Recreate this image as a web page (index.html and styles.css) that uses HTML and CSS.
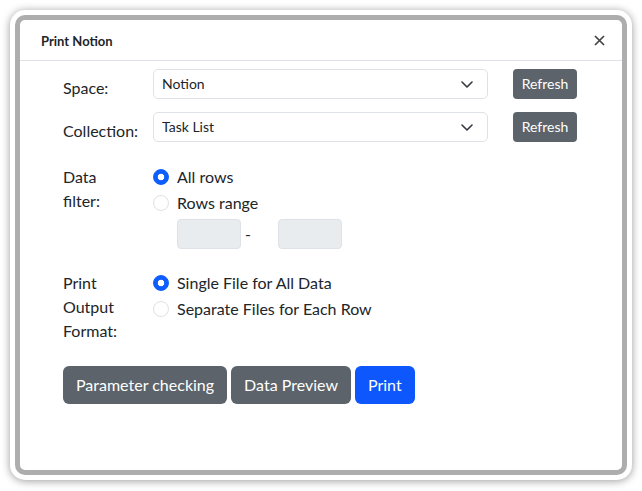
FILE: index.html
```html
<!DOCTYPE html>
<html>
<head>
<meta charset="utf-8">
<link rel="stylesheet" href="styles.css">
</head>
<body>
<div class="frame">
  <div class="modal">
    <div class="modal-header">
      <span class="title">Print Notion</span>
      <svg class="close" width="11" height="11" viewBox="0 0 11 11"><path d="M1 1L10 10M10 1L1 10" stroke="#444" stroke-width="1.7" fill="none"/></svg>
    </div>
    <div class="modal-body">
      <div class="sel-row">
        <div class="label">Space:</div>
        <div class="select"><span>Notion</span><svg width="12" height="7" viewBox="0 0 12 7"><path d="M1 1l5 5 5-5" stroke="#343a40" stroke-width="1.6" fill="none" stroke-linecap="round" stroke-linejoin="round"/></svg></div>
        <button class="btn btn-sm">Refresh</button>
      </div>
      <div class="sel-row second">
        <div class="label">Collection:</div>
        <div class="select"><span>Task List</span><svg width="12" height="7" viewBox="0 0 12 7"><path d="M1 1l5 5 5-5" stroke="#343a40" stroke-width="1.6" fill="none" stroke-linecap="round" stroke-linejoin="round"/></svg></div>
        <button class="btn btn-sm">Refresh</button>
      </div>
      <div class="group filter">
        <div class="glabel">Data<br>filter:</div>
        <div class="opts">
          <div class="check"><span class="radio on"></span>All rows</div>
          <div class="check"><span class="radio"></span>Rows range</div>
          <div class="range"><span class="input"></span><span class="dash">-</span><span class="input"></span></div>
        </div>
      </div>
      <div class="group format">
        <div class="glabel">Print<br>Output<br>Format:</div>
        <div class="opts">
          <div class="check"><span class="radio on"></span>Single File for All Data</div>
          <div class="check"><span class="radio"></span>Separate Files for Each Row</div>
        </div>
      </div>
      <div class="actions">
        <button class="btn">Parameter checking</button>
        <button class="btn">Data Preview</button>
        <button class="btn primary">Print</button>
      </div>
    </div>
  </div>
</div>
</body>
</html>
```
FILE: styles.css
```css
* { box-sizing: border-box; }
html, body { margin: 0; padding: 0; background: #fff; }
body {
  font-family: Lato, "Open Sans", sans-serif;
  color: #212529;
  font-size: 16px;
  line-height: 24px;
}
.frame {
  margin: 10px;
  width: 622px;
  height: 470px;
  padding: 5px;
  background: #fff;
  border-radius: 15px;
  box-shadow: 0 1px 9px rgba(0,0,0,0.4);
}
.modal {
  height: 100%;
  border: 5px solid #adadad;
  border-radius: 10px;
  background: #fff;
}
.modal-header {
  height: 41px;
  border-bottom: 1px solid #dee2e6;
  display: flex;
  align-items: center;
  justify-content: space-between;
  padding: 2px 17px 0 21px;
}
.title { font-size: 13px; font-weight: 700; color: #212529; }
.close { display: block; margin-top: -1px; }
.modal-body { padding: 8px 0 0 43px; }
.sel-row { display: flex; align-items: flex-start; }
.sel-row.second { margin-top: 12px; }
.label { width: 90px; margin-top: 7px; }
.select {
  width: 335px;
  height: 30px;
  border: 1px solid #dee2e6;
  border-radius: 5px;
  display: flex;
  align-items: center;
  justify-content: space-between;
  padding: 0 14px 0 8px;
  font-size: 14px;
}
.select svg { display: block; }
.btn {
  font-family: inherit;
  border: none;
  background: #5c636a;
  color: #fff;
  font-size: 16px;
  line-height: 24px;
  padding: 7px 13px;
  border-radius: 6px;
}
.btn-sm {
  margin-left: 25px;
  height: 30px;
  width: 64px;
  padding: 0;
  font-size: 14px;
  border-radius: 4px;
}
.group { display: flex; }
.filter { margin-top: 22px; }
.format { margin-top: 22px; }
.glabel { width: 90px; }
.check {
  display: flex;
  align-items: center;
  height: 24px;
  margin-bottom: 2px;
}
.radio {
  width: 16px;
  height: 16px;
  border-radius: 50%;
  border: 1px solid #dee2e6;
  margin-right: 8px;
  background: #fff;
}
.radio.on {
  border-color: #0d5efd;
  background: radial-gradient(circle, #fff 0 3px, #0d5efd 3.6px);
}
.range { display: flex; align-items: center; margin: 4px 0 0 24px; }
.input {
  width: 64px;
  height: 30px;
  background: #e9ecef;
  border: 1px solid #dee2e6;
  border-radius: 4px;
}
.dash { width: 37px; padding-left: 4px; }
.actions { display: flex; gap: 4px; margin-top: 23px; }
.primary { background: #0d57fd; }
```
